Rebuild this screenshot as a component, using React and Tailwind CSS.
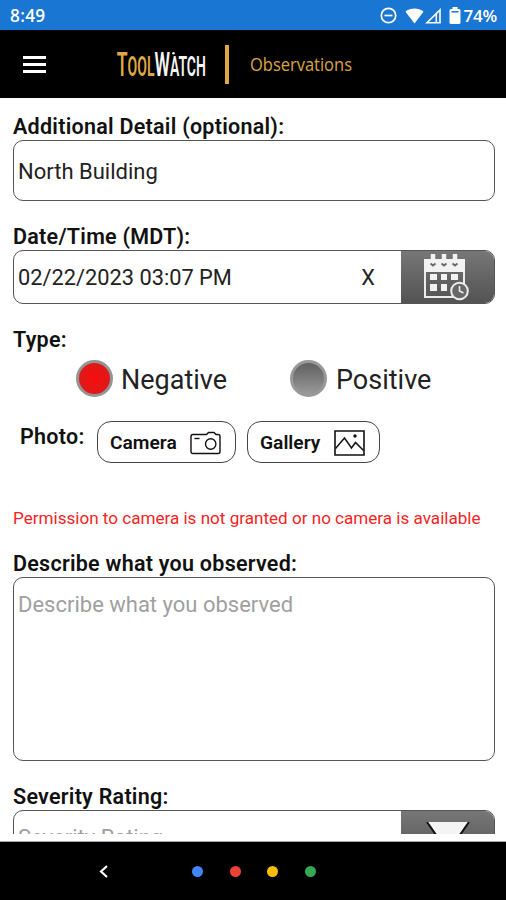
function FieldLabel({ children, className = "" }) {
  return (
    <div className={`flex h-7 items-center whitespace-nowrap pt-[2px] text-[21.5px] font-semibold tracking-[0.26px] ${className}`}>
      {children}
    </div>
  )
}

function StatusBar() {
  return (
    <div className="flex h-[30px] shrink-0 items-center bg-[#1976d2] pl-[10px] pr-[9px] pt-[1px] text-white">
      <span className="flex-1 font-['Open_Sans',sans-serif] text-[17.2px] font-semibold leading-none tracking-[0.3px]">8:49</span>
      <svg width="17" height="17" viewBox="0 0 17 17" fill="none" stroke="white" strokeWidth="1.7">
        <circle cx="8.5" cy="8.5" r="7.2" />
        <path d="M4.5 8.5h8" />
      </svg>
      <svg className="ml-[8px]" width="19" height="16" viewBox="0 0 19 16" fill="white">
        <path d="M0.5 3.8C5.4-.6 13.6-.6 18.5 3.8L9.5 15.5Z" />
      </svg>
      <svg className="ml-[1px]" width="17" height="16" viewBox="0 0 17 16" fill="none" stroke="white" strokeWidth="1.6">
        <path d="M15 2V14.7H2Z" />
        <path d="M11.3 6V14.7" />
      </svg>
      <svg className="ml-[7px]" width="12" height="17" viewBox="0 0 12 17">
        <path d="M3.5 0h5v2H10a1.5 1.5 0 0 1 1.5 1.5v12A1.5 1.5 0 0 1 10 17H2A1.5 1.5 0 0 1 .5 15.5V3.5A1.5 1.5 0 0 1 2 2h1.5z" fill="white" />
        <path d="M2.5 4.8h7" stroke="#1976d2" strokeWidth="1.5" />
      </svg>
      <span className="ml-[2px] font-['Open_Sans',sans-serif] text-[17px] font-semibold leading-none tracking-[-0.2px]">74%</span>
    </div>
  )
}

function Header() {
  return (
    <header className="flex h-[68px] shrink-0 items-center bg-black pl-[23px]">
      <button className="flex flex-col gap-1">
        <span className="h-[3px] w-[23px] bg-white" />
        <span className="h-[3px] w-[23px] bg-white" />
        <span className="h-[3px] w-[23px] bg-white" />
      </button>
      <svg className="ml-[70px]" width="92" height="54" viewBox="0 0 92 54" fontFamily="Roboto, sans-serif" fontWeight="600">
        <text transform="translate(0.8 39) scale(0.518 1)" fontSize="34" fill="#dfa844">
          T<tspan fontSize="27">OOL</tspan>
          <tspan fill="#f4f4f4">W</tspan>
          <tspan fontSize="27" fill="#f4f4f4">ATCH</tspan>
        </text>
        <circle cx="57.5" cy="16.3" r="1.3" fill="#f4f4f4" />
      </svg>
      <div className="ml-[17px] h-[39px] w-[4px] bg-[#dfa844]" />
      <span className="ml-[21px] origin-left scale-x-[0.915] font-['Open_Sans',sans-serif] text-[18px] font-medium text-[#dba640]">Observations</span>
    </header>
  )
}

function CalendarIcon() {
  return (
    <svg className="mr-[4px]" width="46" height="48" viewBox="0 0 46 48">
      <path d="M2 7h39v37H2z" fill="none" stroke="#ececec" strokeWidth="2" />
      <path d="M1 6h41v13H1z" fill="#f2f2f2" />
      <path d="M10 1v10M21 1v10M32 1v10" stroke="#f2f2f2" strokeWidth="4.5" />
      <path d="M7.5 10.5l2.5 2 2.5-2M18.5 10.5l2.5 2 2.5-2M29.5 10.5l2.5 2 2.5-2" stroke="#666" strokeWidth="1.8" fill="none" />
      <path d="M7 21h7v6H7zM18 21h6v6h-6zM28 21h7v6h-7zM7 31h7v7H7zM18 31h6v7h-6z" fill="#f2f2f2" />
      <circle cx="36.5" cy="38" r="8.3" fill="#686868" stroke="#ececec" strokeWidth="2" />
      <path d="M36.5 33v5l4 2" stroke="#ececec" strokeWidth="1.6" fill="none" />
    </svg>
  )
}

function CameraIcon() {
  return (
    <svg width="31" height="24" viewBox="0 0 31 24" fill="none" stroke="#111" strokeWidth="1.4">
      <path d="M3 3.5H16.5L18.5 1.5H24L26 3.5H28Q30 3.5 30 5.5V20.5Q30 22.5 28 22.5H3Q1 22.5 1 20.5V5.5Q1 3.5 3 3.5Z" />
      <circle cx="20.7" cy="13" r="5.2" />
      <path d="M4.5 7.5h5" />
    </svg>
  )
}

function GalleryIcon() {
  return (
    <svg width="31" height="26" viewBox="0 0 31 26" fill="none" stroke="#111" strokeWidth="1.6">
      <path d="M1 1H30V25H1Z" />
      <path d="M1.5 18.5L10.5 8L17.5 18L21.5 12.5L29.5 20.5" strokeWidth="1.5" />
      <circle cx="21" cy="6" r="1.7" fill="#111" stroke="none" />
    </svg>
  )
}

export default function App() {
  return (
    <div className="flex h-[900px] w-[506px] flex-col overflow-hidden bg-white font-[Roboto,sans-serif] text-[#111]">
      <StatusBar />
      <Header />

      <main className="h-[736px] shrink-0 overflow-hidden pl-[13px] pr-[11px] pt-[14px]">
        <FieldLabel>Additional Detail (optional):</FieldLabel>
        <div className="flex h-[61px] items-center rounded-[10px] border border-[#555] pl-[4px] pt-[1px] text-[22px] text-[#222]">
          North Building
        </div>

        <FieldLabel className="mt-[21px]">Date/Time (MDT):</FieldLabel>
        <div className="flex h-[54px] overflow-hidden rounded-[10px] border border-[#555] text-[21.8px] text-[#222]">
          <div className="flex flex-1 items-center pl-[4px] pt-[2px]">
            <span className="flex-1 whitespace-nowrap">02/22/2023 03:07 PM</span>
            <button className="w-[66px] text-center">X</button>
          </div>
          <div className="flex w-[93px] items-center justify-center bg-linear-to-b from-[#777] to-[#535353]">
            <CalendarIcon />
          </div>
        </div>

        <FieldLabel className="mt-[21px]">Type:</FieldLabel>
        <div className="mt-[6px] flex h-[38px] items-center pl-[63px] text-[27px] text-[#222]">
          <span className="size-[37px] rounded-full border-[3px] border-[#949494] bg-radial from-[#f90a0a] to-[#e01818] to-60%" />
          <span className="ml-[8px] w-[169px] pt-[4px]">Negative</span>
          <span className="size-[37px] rounded-full border-[3px] border-[#999] bg-linear-to-b from-[#606060] to-[#999]" />
          <span className="ml-[9px] pt-[4px]">Positive</span>
        </div>

        {/* Photo source buttons */}
        <div className="mt-6 flex h-[42px] text-[19.2px] font-semibold">
          <span className="w-[84px] pl-[7px] text-[21.5px] tracking-[0.26px]">Photo:</span>
          <button className="flex w-[139px] items-center justify-between rounded-[14px] border border-[#444] pl-[12px] pr-[14px] pt-[1px]">
            <span className="pt-[1px]">Camera</span> <CameraIcon />
          </button>
          <button className="ml-[11px] flex w-[133px] items-center justify-between rounded-[14px] border border-[#444] pl-[12px] pr-[14px] pt-[1px]">
            <span className="pt-[1px]">Gallery</span> <GalleryIcon />
          </button>
        </div>

        <p className="mt-[45px] h-5 whitespace-nowrap text-[17.08px] leading-5 text-[#f52424]">
          Permission to camera is not granted or no camera is available
        </p>

        <FieldLabel className="mt-[21px]">Describe what you observed:</FieldLabel>
        <div className="h-[184px] rounded-[10px] border border-[#555] pl-[4px] pt-[10px] text-[22px] text-[#a0a0a0]">
          Describe what you observed
        </div>

        <FieldLabel className="mt-[21px]">Severity Rating:</FieldLabel>
        <div className="flex h-[54px] overflow-hidden rounded-[10px] border border-[#555] text-[22px] text-[#a0a0a0]">
          <div className="flex flex-1 items-center pl-[4px]">Severity Rating</div>
          <div className="flex w-[93px] justify-center bg-linear-to-b from-[#777] to-[#535353] pt-[11px]">
            <svg width="44" height="34" viewBox="0 0 44 34">
              <path d="M1 0H43L22 30Z" fill="#f4f4f4" />
              <path d="M1 0L22 30L43 0" fill="none" stroke="#111" strokeWidth="2" />
            </svg>
          </div>
        </div>
      </main>

      <div className="h-[8px] shrink-0 border-b border-[#aaa]" />
      <nav className="flex flex-1 items-center bg-black pl-[99px]">
        <svg width="9" height="13" viewBox="0 0 9 13" fill="none" stroke="white" strokeWidth="2.2">
          <path d="M8 1L2 6.5L8 12" />
        </svg>
        <span className="ml-[84px] size-[11px] rounded-full bg-[#4285f4]" />
        <span className="ml-[27px] size-[11px] rounded-full bg-[#ea4335]" />
        <span className="ml-[26px] size-[11px] rounded-full bg-[#fbbc05]" />
        <span className="ml-[27px] size-[11px] rounded-full bg-[#34a853]" />
      </nav>
    </div>
  )
}
